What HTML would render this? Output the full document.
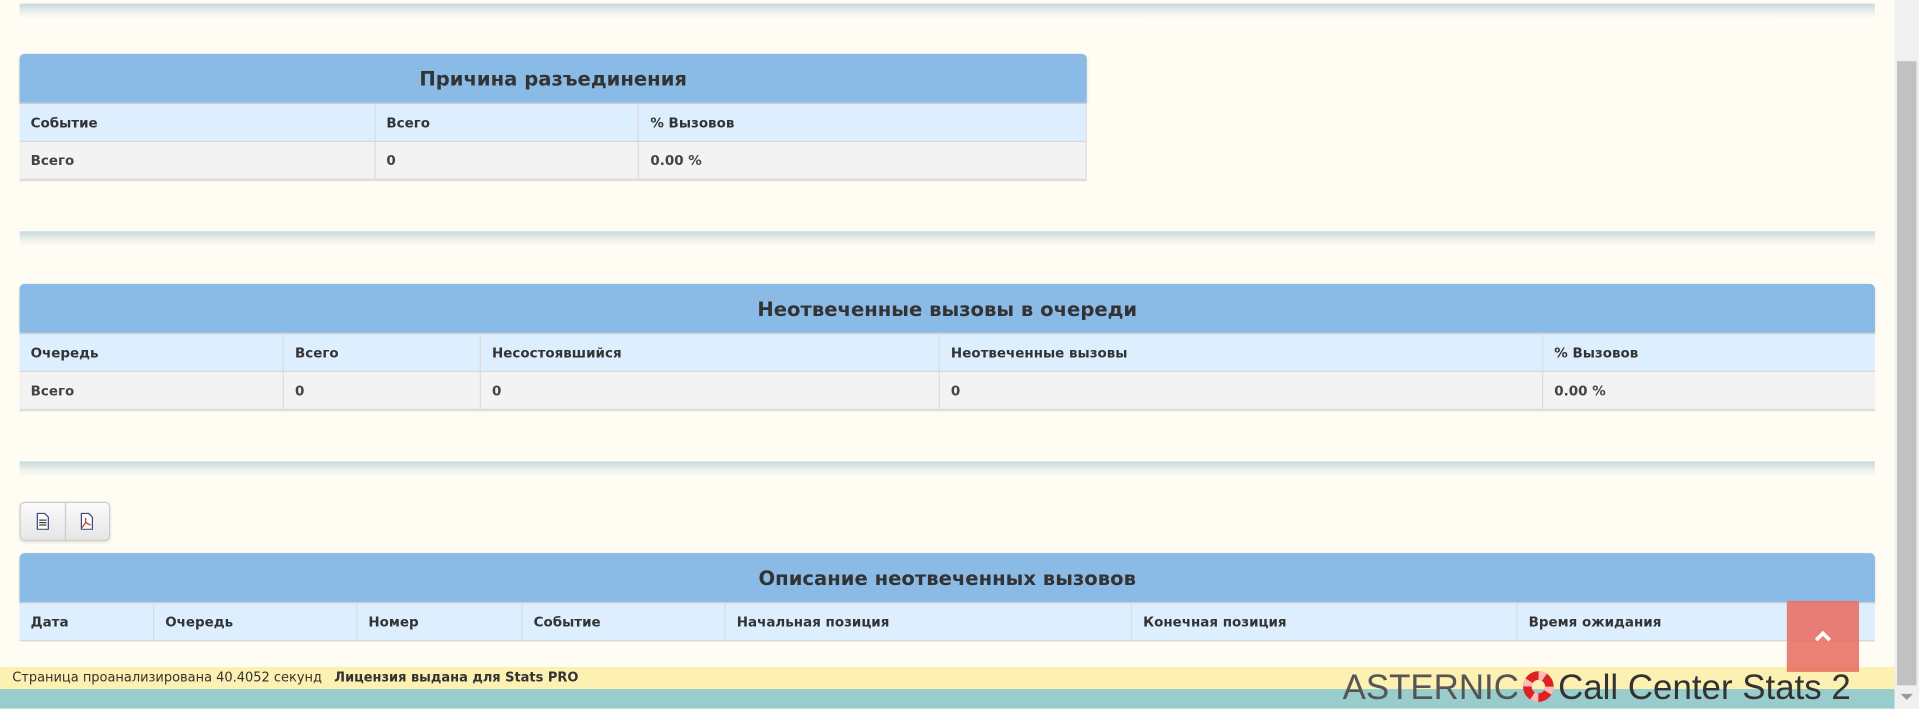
<!DOCTYPE html>
<html><head><meta charset="utf-8"><style>
html,body{margin:0;padding:0;width:1919px;height:708px;overflow:hidden;background:#fffcf3;}
#w{position:absolute;left:0;top:0;width:1568px;height:579px;transform:scale(1.22385);transform-origin:0 0;font-family:"DejaVu Sans","Liberation Sans",sans-serif;color:#333;}
.div{position:absolute;left:16px;width:1516px;height:12px;background:linear-gradient(#c5d9df,#e9efe9 50%,rgba(255,252,243,0));}
.tb{position:absolute;left:16px;}
.hd{height:40px;background:#8abbe7;border-radius:4px 4px 0 0;text-align:center;font-weight:bold;font-size:16px;line-height:42px;color:#333;box-shadow:0 1px 2px rgba(0,0,0,.15);}
.row{display:flex;height:30px;border-bottom:1px solid #d6d6d6;font-weight:bold;font-size:11px;line-height:31px;}
.row div{padding-left:9px;border-right:1px solid #dcdcdc;box-sizing:border-box;}
.row div:last-child{border-right:none}
.th{background:#ddeeff;border-top:1px solid #ccc;}
.bd{background:#f3f3f3;color:#444;border-bottom:2px solid #ddd;}
</style></head><body><div id="w">
<div class="div" style="top:3px"></div>
<div class="tb" style="top:44px;width:872px">
<div class="hd">Причина разъединения</div>
<div class="row th" style="border-right:1px solid #ddd"><div style="width:291px">Событие</div><div style="width:216px">Всего</div><div style="width:365px">% Вызовов</div></div>
<div class="row bd" style="border-right:1px solid #ddd"><div style="width:291px">Всего</div><div style="width:216px">0</div><div style="width:365px">0.00 %</div></div>
</div>
<div class="div" style="top:189px"></div>
<div class="tb" style="top:232px;width:1516px">
<div class="hd">Неотвеченные вызовы в очереди</div>
<div class="row th"><div style="width:216px">Очередь</div><div style="width:161px">Всего</div><div style="width:375px">Несостоявшийся</div><div style="width:493px">Неотвеченные вызовы</div><div style="width:271px">% Вызовов</div></div>
<div class="row bd"><div style="width:216px">Всего</div><div style="width:161px">0</div><div style="width:375px">0</div><div style="width:493px">0</div><div style="width:271px">0.00 %</div></div>
</div>
<div class="div" style="top:377px"></div>
<div style="position:absolute;left:16px;top:410px;width:72px;height:30px;border:1px solid #ccc;border-radius:4px;background:linear-gradient(#fafafa,#e6e6e6);box-shadow:0 1px 2px rgba(0,0,0,.1)">
<div style="position:absolute;left:36px;top:0;width:1px;height:30px;background:#ccc"></div>
<svg style="position:absolute;left:12px;top:8px" width="12" height="14" viewBox="0 0 12 14"><path d="M1.5 .5h6l3 3v10h-9z" fill="#fff" stroke="#3a4a7a"/><path d="M3 6h6M3 8h6M3 10h6" stroke="#444"/></svg>
<svg style="position:absolute;left:48px;top:8px" width="12" height="14" viewBox="0 0 12 14"><path d="M1.5 .5h6l3 3v10h-9z" fill="#fff" stroke="#3a4a7a"/><path d="M5 4v4l-3 4M5 8l4 2" stroke="#b33" fill="none"/></svg>
</div>
<div class="tb" style="top:452px;width:1516px">
<div class="hd">Описание неотвеченных вызовов</div>
<div class="row th"><div style="width:110px">Дата</div><div style="width:166px">Очередь</div><div style="width:135px">Номер</div><div style="width:166px">Событие</div><div style="width:332px">Начальная позиция</div><div style="width:315px">Конечная позиция</div><div style="width:292px">Время ожидания</div></div>
</div>
<div style="position:absolute;left:0;top:545px;width:1548px;height:18px;background:#fdf0b3;font-size:10.6px;line-height:18px;padding-left:10px;box-sizing:border-box">Страница проанализирована 40.4052 секунд &nbsp; <b>Лицензия выдана для Stats PRO</b></div>
<div style="position:absolute;left:0;top:563px;width:1548px;height:16px;background:#99cccc"></div>
<div style="position:absolute;left:1460px;top:491px;width:59px;height:58px;background:rgba(232,110,98,.88)"><svg style="position:absolute;left:22px;top:24px" width="15" height="10" viewBox="0 0 15 10"><path d="M2 8l5.5-5.5L13 8" stroke="#fff" stroke-width="3" fill="none"/></svg></div>
<div style="position:absolute;left:1097px;top:545px;font-family:'Liberation Sans',sans-serif;font-size:28.5px;line-height:34px;color:#555;white-space:nowrap;letter-spacing:0px">ASTERNIC<svg width="26" height="26" viewBox="0 0 26 26" style="vertical-align:-3px;margin:0 3px"><circle cx="13" cy="13" r="9" fill="none" stroke="#d22" stroke-width="7"/><circle cx="13" cy="13" r="9" fill="none" stroke="#fbb" stroke-width="7" stroke-dasharray="5 9.1"/></svg><span style="color:#333">Call Center Stats 2</span></div>
<div style="position:absolute;left:1548px;top:0;width:20px;height:579px;background:#f0f0f0"><div style="position:absolute;left:2px;top:50px;width:16px;height:510px;background:#c1c1c1"></div><div style="position:absolute;left:5px;top:567px;border:5px solid transparent;border-top:5px solid #999;border-bottom:none"></div></div>
</div></body></html>
